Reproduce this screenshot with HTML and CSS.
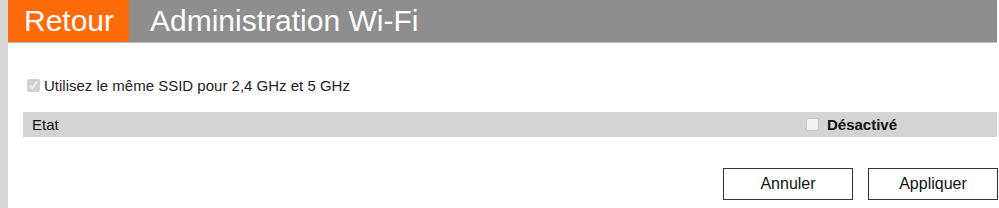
FILE: index.html
```html
<!DOCTYPE html>
<html lang="fr">
<head>
    <meta charset="UTF-8">
    <title>Administration Wi-Fi</title>
    <link rel="stylesheet" href="styles.css">
</head>
<body>

<div class="page">
    <!-- barre du haut -->
    <div class="top-bar">
        <a class="back-btn" href="#">Retour</a>
        <h1 class="page-title">Administration Wi-Fi</h1>
    </div>

    <div class="content">
        <label class="same-ssid">
            <input type="checkbox" checked disabled>
            <span>Utilisez le même SSID pour 2,4 GHz et 5 GHz</span>
        </label>

        <div class="state-row">
            <span class="state-label">Etat</span>
            <label class="state-value">
                <input type="checkbox" class="soft-check">
                <span>Désactivé</span>
            </label>
        </div>

        <div class="actions">
            <button class="action-btn">Annuler</button>
            <button class="action-btn">Appliquer</button>
        </div>
    </div>
</div>

</body>
</html>
```

FILE: styles.css
```css
body {
    margin: 0;
    font-family: 'Liberation Sans', Arial, sans-serif;
    background: #fff;
    color: #111;
}
.page {
    border-left: 8px solid #d9d9d9;
    height: 208px;
    box-sizing: border-box;
}
.top-bar {
    display: flex;
    align-items: stretch;
    height: 42px;
    background-color: #8e8e8e;
    border-bottom: 1px solid #bdbdbd;
    margin-right: 2px;
}
.back-btn {
    display: flex;
    align-items: center;
    width: 121px;
    padding-left: 16px;
    box-sizing: border-box;
    background-color: #ff6a0a;
    color: #fff;
    text-decoration: none;
    font-size: 30px;
}
.page-title {
    margin: 0 0 0 21px;
    display: flex;
    align-items: center;
    color: #fff;
    font-weight: normal;
    font-size: 30px;
}
.content {
    padding: 34px 2px 0 15px;
}
.same-ssid {
    display: flex;
    align-items: center;
    height: 17px;
    font-size: 15px;
    color: #222;
}
.same-ssid input {
    margin: 0 4px 0 4px;
    width: 13px;
    height: 13px;
}
.state-row {
    display: flex;
    align-items: center;
    justify-content: space-between;
    margin-top: 18px;
    height: 25px;
    background-color: #d4d4d4;
    font-size: 15px;
}
.state-label {
    padding-left: 9px;
}
.state-value {
    display: flex;
    align-items: center;
    width: 191px;
    font-weight: bold;
}
.soft-check {
    appearance: none;
    margin: 0 8px 0 0;
    width: 13px;
    height: 13px;
    border: 1px solid #c4c4c4;
    border-radius: 2px;
    background-color: #f2f2f2;
}
.actions {
    display: flex;
    justify-content: flex-end;
    gap: 15px;
    margin-top: 31px;
    margin-right: -1px;
}
.action-btn {
    width: 130px;
    height: 32px;
    background: #fff;
    border: 1px solid #333;
    border-radius: 0;
    font-family: 'Liberation Sans', Arial, sans-serif;
    font-size: 16px;
    color: #111;
    cursor: pointer;
}
```
